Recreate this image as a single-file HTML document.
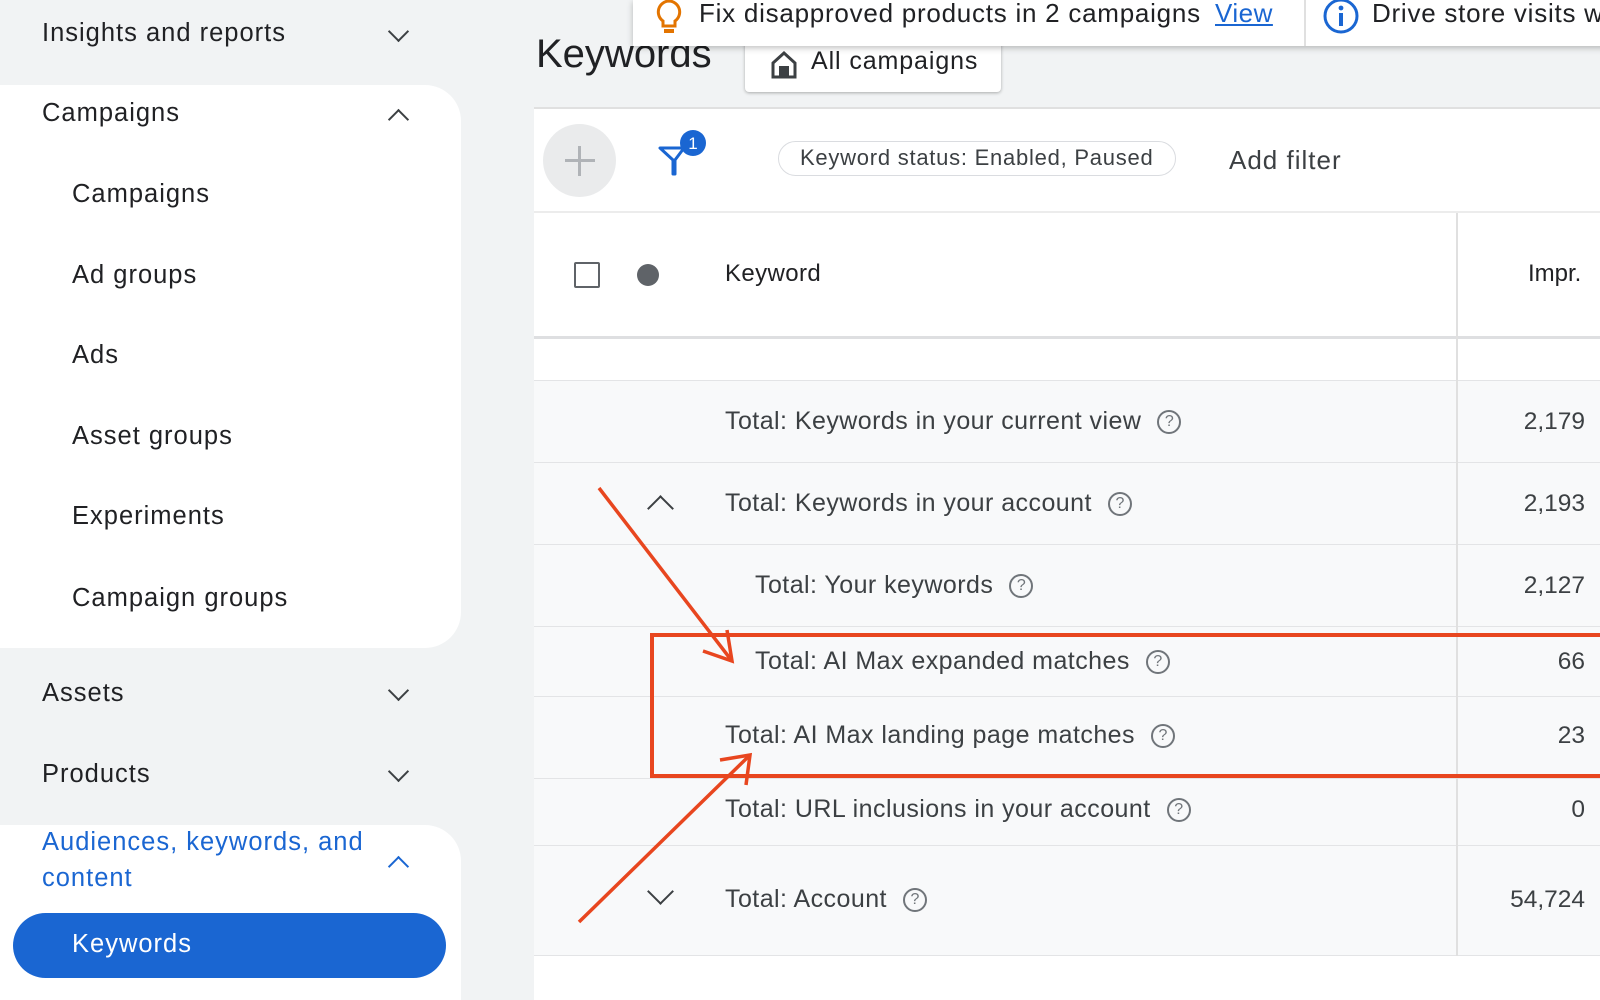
<!DOCTYPE html>
<html><head><meta charset="utf-8"><style>
*{margin:0;padding:0;box-sizing:border-box}
body{width:1600px;height:1000px;overflow:hidden;background:#f1f3f4;font-family:"Liberation Sans",Arial,sans-serif;color:#3c4043;position:relative}
.a{position:absolute;white-space:nowrap}
.nav{font-size:25.5px;letter-spacing:1px;color:#202124}
.chev{position:absolute;width:15px;height:15px;border-right:2.5px solid #3c4043;border-bottom:2.5px solid #3c4043}
.down{transform:rotate(45deg)}
.up{transform:rotate(-135deg)}
.row{position:absolute;left:534px;width:1066px;background:#f8f9fa;border-bottom:1.5px solid #e3e4e6}
.t{font-size:25px;letter-spacing:0.45px;color:#3c4043}
.q{display:inline-block;width:24px;height:24px;border:2px solid #70757a;border-radius:50%;font-size:16px;letter-spacing:0;text-align:center;line-height:20px;color:#70757a;vertical-align:middle;margin-left:16px}
.n{position:absolute;right:15px;font-size:24.5px;color:#3c4043}
.tb .chev{width:19px;height:19px}
</style></head><body>
<!-- sidebar -->
<div class="a" style="left:0;top:85px;width:461px;height:563px;background:#fff;border-radius:0 36px 36px 0"></div>
<div class="a" style="left:0;top:825px;width:461px;height:175px;background:#fff;border-radius:0 36px 0 0"></div>
<div class="a nav" style="left:42px;top:19px">Insights and reports</div><div class="chev down" style="left:391px;top:24px"></div>
<div class="a nav" style="left:42px;top:99px">Campaigns</div><div class="chev up" style="left:391px;top:112px"></div>
<div class="a nav" style="left:72px;top:180px">Campaigns</div>
<div class="a nav" style="left:72px;top:261px">Ad groups</div>
<div class="a nav" style="left:72px;top:341px">Ads</div>
<div class="a nav" style="left:72px;top:422px">Asset groups</div>
<div class="a nav" style="left:72px;top:502px">Experiments</div>
<div class="a nav" style="left:72px;top:584px">Campaign groups</div>
<div class="a nav" style="left:42px;top:679px">Assets</div><div class="chev down" style="left:391px;top:683px"></div>
<div class="a nav" style="left:42px;top:824px;color:#1a66d2;line-height:36px">Audiences, keywords, and<br>content</div><div class="chev up" style="left:391px;top:859px;border-color:#1a66d2"></div>
<div class="a nav" style="left:42px;top:760px">Products</div><div class="chev down" style="left:391px;top:764px"></div>
<div class="a" style="left:13px;top:913px;width:433px;height:65px;background:#1a66d2;border-radius:33px"></div>
<div class="a nav" style="left:72px;top:930px;color:#fff">Keywords</div>
<!-- main -->
<div class="a" style="left:534px;top:109px;width:1066px;height:891px;background:#fff"></div>
<div class="a" style="left:536px;top:32px;font-size:40px;color:#202124">Keywords</div>
<div class="a" style="left:745px;top:41px;width:256px;height:51px;background:#fff;border-radius:4px;box-shadow:0 1px 3px rgba(0,0,0,.3)"></div>
<svg class="a" style="left:770px;top:50px" width="28" height="30" viewBox="0 0 28 30"><path d="M3 13 L14 3 L25 13 V27 H3 Z" fill="none" stroke="#3c4043" stroke-width="3"/><rect x="9" y="16" width="10" height="11" fill="#3c4043"/></svg>
<div class="a" style="left:811px;top:47px;font-size:25px;letter-spacing:0.9px;color:#202124">All campaigns</div>
<div class="a" style="left:633px;top:0;width:980px;height:46px;background:#fff;box-shadow:0 2px 6px rgba(0,0,0,.25)"></div>
<svg class="a" style="left:655px;top:0" width="28" height="36" viewBox="0 0 28 36"><path d="M14 1a11 11 0 0 0-6 20v5h12v-5a11 11 0 0 0-6-20z" fill="none" stroke="#e37400" stroke-width="3"/><rect x="9" y="29" width="10" height="4" fill="#e37400"/></svg>
<div class="a" style="left:699px;top:-2px;font-size:26px;letter-spacing:0.75px;color:#202124">Fix disapproved products in 2 campaigns</div>
<div class="a" style="left:1215px;top:-2px;font-size:26px;letter-spacing:0.5px;color:#1a66d2;text-decoration:underline">View</div>
<div class="a" style="left:1304px;top:0;width:2px;height:46px;background:#e0e0e0"></div>
<svg class="a" style="left:1322px;top:0" width="38" height="36" viewBox="0 0 38 36"><circle cx="19" cy="16" r="16" fill="none" stroke="#1a66d2" stroke-width="3"/><rect x="17" y="13" width="4" height="13" fill="#1a66d2"/><circle cx="19" cy="8" r="2.4" fill="#1a66d2"/></svg>
<div class="a" style="left:1372px;top:-2px;font-size:26px;letter-spacing:0.75px;color:#202124">Drive store visits w</div>
<div class="a" style="left:534px;top:107px;width:1066px;height:2px;background:#e0e0e0"></div>
<!-- toolbar -->
<div class="a" style="left:543px;top:124px;width:73px;height:73px;border-radius:50%;background:#eaebec"></div>
<div class="a" style="left:565px;top:159px;width:30px;height:3px;background:#b0b3b7"></div><div class="a" style="left:578px;top:146px;width:3px;height:30px;background:#b0b3b7"></div>
<svg class="a" style="left:657px;top:128px" width="52" height="50" viewBox="0 0 52 50"><path d="M3 20 H27 L18 32 V46 H16 V32 Z" fill="none" stroke="#1a66d2" stroke-width="3" stroke-linejoin="round"/><circle cx="36" cy="15" r="13" fill="#1a66d2"/><text x="36" y="21" font-size="17" fill="#fff" text-anchor="middle" font-family="Liberation Sans">1</text></svg>
<div class="a" style="left:778px;top:141px;width:398px;height:35px;border:1.5px solid #dadce0;border-radius:18px"></div>
<div class="a" style="left:800px;top:145px;font-size:22px;letter-spacing:0.75px;color:#3c4043">Keyword status: Enabled, Paused</div>
<div class="a" style="left:1229px;top:145px;font-size:26px;letter-spacing:1px;color:#3c4043">Add filter</div>
<div class="a" style="left:534px;top:211px;width:1066px;height:2px;background:#ececec"></div>
<!-- header -->
<div class="a" style="left:574px;top:262px;width:26px;height:26px;border:2.5px solid #5f6368;border-radius:2px"></div>
<div class="a" style="left:637px;top:264px;width:22px;height:22px;border-radius:50%;background:#5f6368"></div>
<div class="a" style="left:725px;top:260px;font-size:24px;letter-spacing:0.4px;color:#202124">Keyword</div>
<div class="a" style="left:1528px;top:260px;font-size:24px;color:#202124">Impr.</div>
<div class="a" style="left:534px;top:336px;width:1066px;height:3px;background:#dedfe1"></div>
<div class="row" style="top:339px;height:42px;background:#fff"></div>
<div class="row" style="top:381px;height:82px"><div class="a t" style="left:191px;top:26px">Total: Keywords in your current view<span class="q">?</span></div><div class="n" style="top:27px">2,179</div></div>
<div class="row tb" style="top:463px;height:82px"><div class="chev up" style="left:117px;top:36px"></div><div class="a t" style="left:191px;top:26px">Total: Keywords in your account<span class="q">?</span></div><div class="n" style="top:27px">2,193</div></div>
<div class="row" style="top:545px;height:82px"><div class="a t" style="left:221px;top:26px">Total: Your keywords<span class="q">?</span></div><div class="n" style="top:27px">2,127</div></div>
<div class="row" style="top:627px;height:70px"><div class="a t" style="left:221px;top:20px">Total: AI Max expanded matches<span class="q">?</span></div><div class="n" style="top:21px">66</div></div>
<div class="row" style="top:697px;height:82px"><div class="a t" style="left:191px;top:24px">Total: AI Max landing page matches<span class="q">?</span></div><div class="n" style="top:25px">23</div></div>
<div class="row" style="top:779px;height:67px"><div class="a t" style="left:191px;top:16px">Total: URL inclusions in your account<span class="q">?</span></div><div class="n" style="top:17px">0</div></div>
<div class="row tb" style="top:846px;height:110px"><div class="chev down" style="left:117px;top:36px"></div><div class="a t" style="left:191px;top:39px">Total: Account<span class="q">?</span></div><div class="n" style="top:40px">54,724</div></div>
<div class="a" style="left:1456px;top:213px;width:2px;height:743px;background:#e0e0e0"></div>
<!-- annotations -->
<div class="a" style="left:650px;top:633px;width:960px;height:145px;border:4px solid #e8461f"></div>
<svg class="a" style="left:0;top:0" width="1600" height="1000"><g stroke="#e8461f" stroke-width="3.5" fill="none"><path d="M599 488 L732 661"/><path d="M703 651 L732 661 L727 630"/><path d="M579 922 L750 755"/><path d="M720 760 L750 755 L746 785"/></g></svg>
</body></html>
